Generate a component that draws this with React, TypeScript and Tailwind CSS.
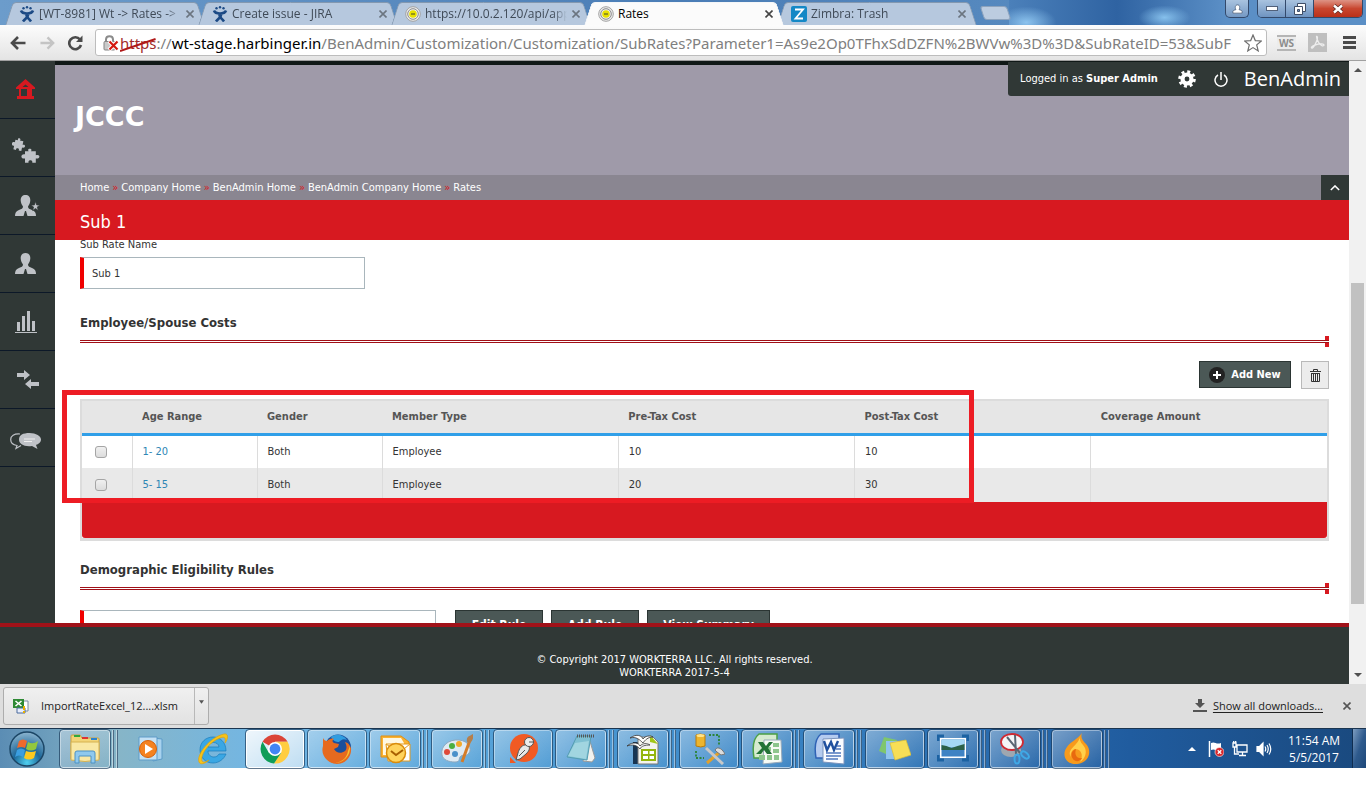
import React from 'react'

const UI = "font-['Open_Sans','Noto_Sans',sans-serif]"
const APP = "font-['DejaVu_Sans_Condensed','DejaVu_Sans',sans-serif]"

type Svg = { children: React.ReactNode; size?: number; className?: string }

function Icon({ children, size = 32, className = '' }: Svg) {
    return (
        <svg viewBox="0 0 32 32" width={size} height={size} className={`shrink-0 ${className}`} aria-hidden="true">
            {children}
        </svg>
    )
}

/* ---------- browser ---------- */

const JiraIcon = () => (
    <svg viewBox="0 0 16 16" width="16" height="16" className="shrink-0" fill="none" stroke="#1c4a85" strokeWidth="2.6">
        <path d="M2 4.500c1.500 4 10.500 4 12 0M7.500 8c-1 3 2 4 4.500 7.500M9 8c1 3-2.500 4-5 7.500" />
        <circle cx="4.500" cy="2.200" r="1.200" fill="#1c4a85" stroke="none" />
        <circle cx="8" cy="1.200" r="1.200" fill="#1c4a85" stroke="none" />
        <circle cx="11.500" cy="2.200" r="1.200" fill="#1c4a85" stroke="none" />
    </svg>
)

const TargetIcon = () => (
    <svg viewBox="0 0 16 16" width="16" height="16" className="shrink-0" fill="none">
        <circle cx="8" cy="8" r="7.300" stroke="#a2a2a2" fill="#eee" />
        <circle cx="8" cy="8" r="5.300" stroke="#8a8a8a" />
        <circle cx="8" cy="8" r="3.800" fill="#e8e000" />
        <path d="M6 8h4" stroke="#7a7a20" strokeWidth="1.500" />
    </svg>
)

const ZimbraIcon = () => (
    <svg viewBox="0 0 16 16" width="16" height="16" className="shrink-0">
        <rect width="16" height="16" rx="2" fill="#1488c6" />
        <path d="M4 3.500h8L4.500 12.500H12" fill="none" stroke="#fff" strokeWidth="1.800" />
    </svg>
)

const CloseX = ({ color = '#6b7580' }: { color?: string }) => (
    <svg viewBox="0 0 8 8" width="8" height="8" stroke={color} strokeWidth="1.600">
        <path d="M.5.5l7 7M7.500.5l-7 7" />
    </svg>
)

const tabs = [
    { title: '[WT-8981] Wt -> Rates ->', icon: <JiraIcon />, active: false },
    { title: 'Create issue - JIRA', icon: <JiraIcon />, active: false },
    { title: 'https://10.0.2.120/api/app', icon: <TargetIcon />, active: false },
    { title: 'Rates', icon: <TargetIcon />, active: true },
    { title: 'Zimbra: Trash', icon: <ZimbraIcon />, active: false },
]

function TabStrip() {
    return (
        <div className="flex h-[25px] items-end bg-linear-to-r from-[#6c9ccb] via-[#4a7db6] to-[#6396c8] pl-[5px]">
            {tabs.map((t, i) => (
                <div key={i} className={`relative -mr-[7px] h-[23px] w-[200px] ${t.active ? 'z-10' : ''}`}>
                    <span
                        className={`absolute inset-y-0 left-1 w-1/2 -skew-x-[18deg] rounded-tl border-t border-l ${
                            t.active ? 'border-[#f4f6f8] bg-[#fbfbfb]' : 'border-[#8398b0] bg-[#b6c8de]'
                        }`}
                    />
                    <span
                        className={`absolute inset-y-0 right-1 w-1/2 skew-x-[18deg] rounded-tr border-t border-r ${
                            t.active ? 'border-[#f4f6f8] bg-[#fbfbfb]' : 'border-[#8398b0] bg-[#b6c8de]'
                        }`}
                    />
                    <div className="relative flex h-full items-center pr-2 pl-3.5">
                        {t.icon}
                        <span
                            className={`ml-1 w-[142px] overflow-hidden text-[12px] whitespace-nowrap ${
                                t.active ? 'text-black' : 'mask-r-from-90% text-[#3f4a57]'
                            }`}
                        >
                            {t.title}
                        </span>
                        <button aria-label="Close tab" className="ml-[5px]">
                            <CloseX color={t.active ? '#444' : '#6b7580'} />
                        </button>
                    </div>
                </div>
            ))}
            <button
                aria-label="New tab"
                className="mb-[5px] ml-3 h-[14px] w-[27px] skew-x-[18deg] rounded-[3px] border border-[#8da3bd] bg-[#bccce0]"
            />
            <div className="flex-1 self-stretch bg-[radial-gradient(ellipse_30px_16px_at_8%_90%,#8cc3ee,transparent),radial-gradient(ellipse_26px_12px_at_72%_70%,#86c0ec,transparent),linear-gradient(90deg,#4b80ba,#2f63a2_50%,#5b8fc6)]" />
            <div className="flex gap-2 self-stretch bg-[#5b8fc6] pr-[3px]">
                <button
                    aria-label="User"
                    className="flex h-[18px] w-6 items-center justify-center rounded-b-[5px] border border-t-0 border-[#33496b] bg-linear-to-b from-[#a9c3df] to-[#7599c4]"
                >
                    <svg viewBox="0 0 12 10" width="11" height="10" fill="#fff" stroke="#4a5a75" strokeWidth=".8">
                        <path d="M1 9.500V7.500C1 6.500 3.500 6 4.300 5.700 2.500 2 4.500.5 6 .5s3.500 1.500 1.700 5.200C8.500 6 11 6.500 11 7.500v2z" />
                    </svg>
                </button>
                <div className="flex h-[18px] overflow-hidden rounded-b-[5px] border border-t-0 border-[#33496b]">
                    <button
                        aria-label="Minimize"
                        className="flex w-7 items-center justify-center border-r border-[#33496b] bg-linear-to-b from-[#a9c3df] to-[#6f94c1]"
                    >
                        <span className="h-[5px] w-3 border border-[#52617a] bg-white" />
                    </button>
                    <button
                        aria-label="Restore"
                        className="flex w-7 items-center justify-center border-r border-[#33496b] bg-linear-to-b from-[#a9c3df] to-[#6f94c1]"
                    >
                        <svg viewBox="0 0 12 12" width="12" height="12" fill="#fff" stroke="#3f4d66">
                            <path d="M3.500.5h8v8h-8z" />
                            <path d="M.5 3.500h8v8h-8z" />
                            <path d="M3.500 6.500h2v2h-2z" fill="#6f94c1" />
                        </svg>
                    </button>
                    <button
                        aria-label="Close"
                        className="flex w-12 items-center justify-center bg-linear-to-b from-[#dd9385] via-[#c8462f] to-[#bb3019]"
                    >
                        <svg viewBox="0 0 12 10" width="12" height="10">
                            <path d="M2 1.500l8 7M10 1.500l-8 7" stroke="#5c2a26" strokeWidth="4" />
                            <path d="M2 1.500l8 7M10 1.500l-8 7" stroke="#fff" strokeWidth="2.400" />
                        </svg>
                    </button>
                </div>
            </div>
        </div>
    )
}

function Toolbar() {
    return (
        <div className="flex h-9 items-center border-b border-[#a0a0a0] bg-linear-to-b from-[#fcfcfc] to-[#e4e4e4] px-2.5">
            <button aria-label="Back" className="mr-3.5">
                <svg viewBox="0 0 16 14" width="16" height="14" fill="none" stroke="#4a4a4a" strokeWidth="2.600">
                    <path d="M15.500 7H2.500M8 1L2 7l6 6" />
                </svg>
            </button>
            <button aria-label="Forward" className="mr-3">
                <svg viewBox="0 0 16 14" width="15" height="14" fill="none" stroke="#c4c4c4" strokeWidth="2.600">
                    <path d="M.5 7h13M8 1l6 6-6 6" />
                </svg>
            </button>
            <button aria-label="Reload" className="mr-3">
                <svg viewBox="0 0 16 16" width="16" height="16" fill="none" stroke="#4a4a4a" strokeWidth="2.600">
                    <path d="M13 4.500A6 6 0 1 0 14 10" />
                    <path d="M15.500.5v6.500H9z" fill="#4a4a4a" stroke="none" />
                </svg>
            </button>
            <div
                role="textbox"
                aria-label="Address"
                className="flex h-[27px] min-w-0 flex-1 items-center rounded-[3px] border border-[#bdbdbd] bg-white pr-1 pl-[7px]"
            >
                <svg viewBox="0 0 16 16" width="16" height="16" className="mr-px shrink-0">
                    <path d="M3 7V4.500C3 0 10 0 10 4.500V7" fill="none" stroke="#8b8b8b" strokeWidth="2" />
                    <rect x="1" y="6.500" width="11" height="8.500" rx="1" fill="#c9c9c9" stroke="#858585" />
                    <path d="M6 6l9 9M15 6l-9 9" stroke="#fff" strokeWidth="4" />
                    <path d="M6.500 6.500l8 8M14.500 6.500l-8 8" stroke="#d3180f" strokeWidth="2.200" />
                </svg>
                <span className="min-w-0 flex-1 overflow-hidden font-['Noto_Sans',sans-serif] text-[15px] leading-[22px] whitespace-nowrap text-[#808080]">
                    <span className="relative text-[#a12a2a]">
                        https
                        <svg viewBox="0 0 38 16" className="absolute inset-x-0 top-1 h-4 w-full" preserveAspectRatio="none">
                            <path d="M0 14L37 2" stroke="#b01818" strokeWidth="2" />
                        </svg>
                    </span>
                    ://<span className="text-black">wt-stage.harbinger.in</span>
                    /BenAdmin/Customization/Customization/SubRates?Parameter1=As9e2Op0TFhxSdDZFN%2BWVw%3D%3D&amp;SubRateID=53&amp;SubF
                </span>
                <svg viewBox="0 0 18 18" width="18" height="18" className="shrink-0" fill="#fff" stroke="#6e6e6e" strokeWidth="1.200">
                    <path d="M9 1l2.300 5.600 6 .4-4.600 3.900 1.500 6L9 13.600 3.800 16.900l1.500-6L.7 7l6-.4z" />
                </svg>
            </div>
            <button
                aria-label="WebSite tools"
                className="ml-2.5 h-4 w-[19px] border-y-2 border-[#b5b5b5] bg-[#ececec] text-center text-[10px] leading-3 font-bold text-[#8d8d8d]"
            >
                WS
            </button>
            <button aria-label="PDF" className="ml-3 flex size-[19px] items-center justify-center bg-[#bfbfbf]">
                <svg viewBox="0 0 16 16" width="15" height="15" fill="none" stroke="#eee" strokeWidth="1.400">
                    <path d="M7 1.500c2 0 .5 5-1.500 8.500S2 15 1.500 13.500s7-4.500 11-4 2.500 2.500.5 2S7 6 7 1.500z" />
                </svg>
            </button>
            <button aria-label="Menu" className="ml-4 flex w-[13px] flex-col gap-0.5">
                <span className="h-[3px] bg-[#4a4a4a]" />
                <span className="h-[3px] bg-[#4a4a4a]" />
                <span className="h-[3px] bg-[#4a4a4a]" />
            </button>
        </div>
    )
}

/* ---------- application ---------- */

const puzzle = 'M0 3h3C1 0 7 0 5 3h4v4c4-2 4 4 0 3v4H6c1-3-4-3-3 0H0v-4c-4 1-4-5 0-4z'
const person = 'M10.500 0c3 0 5 2 4.800 5.500C15.200 8 14 10 13 11.500c0 2 1.500 2.500 4 3.500 3 1 4 3 4 6h-8.500L11 16h-1l-1.500 5H0c0-3 1-5 4-6 2.500-1 4-1.500 4-3.500C7 10 5.800 8 5.700 5.500 5.500 2 7.500 0 10.500 0z'

const navItems = [
    {
        label: 'Home',
        icon: (
            <svg viewBox="0 0 19 22" width="19" height="22">
                <path
                    fillRule="evenodd"
                    d="M9.500 0L19 8.500V10h-3v7h2v3H1v-3h2v-7H0V8.500zM5 10v7h6v-7zM6.500 8h6L9.500 5.500z"
                    fill="#d71920"
                />
            </svg>
        ),
    },
    {
        label: 'Components',
        icon: (
            <svg viewBox="0 0 28 27" width="28" height="27" fill="#bfc2c7" className="mt-1">
                <path d={puzzle} transform="translate(4 1) rotate(12) scale(.9)" />
                <path d={puzzle} transform="translate(13 12) scale(1.200 1.050)" />
            </svg>
        ),
    },
    {
        label: 'Favourite employees',
        icon: (
            <svg viewBox="0 0 25 21" width="25" height="21" fill="#bfc2c7" className="ml-1">
                <path d={person} />
                <path d="M20.500 6.500l1.200 3.500H25l-2.700 2 1 3.500-2.800-2-2.900 2 1-3.500-2.700-2h3.500z" stroke="#303836" strokeWidth=".7" />
            </svg>
        ),
    },
    {
        label: 'Employees',
        icon: (
            <svg viewBox="0 0 21 21" width="21" height="21" fill="#bfc2c7">
                <path d={person} />
            </svg>
        ),
    },
    {
        label: 'Reports',
        icon: (
            <svg viewBox="0 0 22 22" width="22" height="22" fill="#bfc2c7">
                <path d="M2 11h3v9H2zM7 5h3v15H7zM12 0h3v20h-3zM17 10h3v10h-3zM0 21h22v1H0z" />
            </svg>
        ),
    },
    {
        label: 'Transfers',
        icon: (
            <svg viewBox="0 0 22 19" width="22" height="19" fill="#bfc2c7" className="ml-1">
                <path d="M0 3h7V0l6 5-6 5V7H0zM22 12h-8V9l-6 5 6 5v-3h8z" />
            </svg>
        ),
    },
    {
        label: 'Messages',
        icon: (
            <svg viewBox="0 0 31 17" width="31" height="17" className="mt-2">
                <path d="M10 1C4 .5.700 3 .700 6.500S4 12 7 12.500L6 15.500l5-3" fill="none" stroke="#bfc2c7" strokeWidth="1.200" />
                <path d="M19.500 0C26 0 31 3 31 6.500c0 3-2.500 4.500-5 5.500l1.500 4-5.500-3c-8 1-13-2-13-6.500S13 0 19.500 0z" fill="#bfc2c7" />
                <path d="M14 6h11M14 8.500h8" stroke="#eee" />
            </svg>
        ),
    },
]

const crumbs = ['Home', 'Company Home', 'BenAdmin Home', 'BenAdmin Company Home', 'Rates']

const columns = ['Age Range', 'Gender', 'Member Type', 'Pre-Tax Cost', 'Post-Tax Cost', 'Coverage Amount']

const rows = [
    { age: '1- 20', gender: 'Both', member: 'Employee', pre: '10', post: '10', coverage: '' },
    { age: '5- 15', gender: 'Both', member: 'Employee', pre: '20', post: '30', coverage: '' },
]

function SectionTitle({ children }: { children: React.ReactNode }) {
    return (
        <div>
            <h2 className="text-[13px] leading-4 font-bold text-[#333]">{children}</h2>
            <div className="mt-[5px] flex h-[11px] items-center">
                <div className="h-[3px] flex-1 border-y border-[#a01018]" />
                <div className="flex w-1 flex-col">
                    <span className="h-1 bg-[#d71920]" />
                    <span className="h-[3px] border-y border-[#a01018]" />
                    <span className="h-1 bg-[#d71920]" />
                </div>
            </div>
        </div>
    )
}

function DarkButton({ children, className = '' }: { children: React.ReactNode; className?: string }) {
    return (
        <button
            className={`flex items-center justify-center border border-[#2b3533] bg-[#4b5856] font-bold text-white ${className}`}
        >
            {children}
        </button>
    )
}

function Sidebar() {
    return (
        <nav className="w-[55px] shrink-0 bg-[#303836]">
            {navItems.map((n) => (
                <a
                    key={n.label}
                    href="#"
                    aria-label={n.label}
                    className="flex h-[58px] items-center justify-center border-b border-[#0c1828] pr-1"
                >
                    {n.icon}
                </a>
            ))}
        </nav>
    )
}

function Header() {
    return (
        <header>
            <div className="flex h-[114px] items-start justify-between border-t-4 border-[#101817] bg-[#9f9aa9] pl-5">
                <h1 className="pt-9 font-['DejaVu_Sans',sans-serif] text-[27px] leading-8 font-bold text-white">JCCC</h1>
                <div className="-mt-[3px] flex h-[34px] items-center rounded-bl-[3px] bg-[#303836] pr-2 pl-3 text-[11px] text-white">
                    <span>
                        Logged in as <b>Super Admin</b>
                    </span>
                    <button aria-label="Settings" className="ml-5">
                        <svg viewBox="0 0 20 20" width="18" height="18" fill="none" stroke="#fff">
                            <circle cx="10" cy="10" r="5" strokeWidth="4.600" />
                            <circle cx="10" cy="10" r="8.300" strokeWidth="3" strokeDasharray="3.300 3.220" />
                        </svg>
                    </button>
                    <button aria-label="Log out" className="ml-[18px]">
                        <svg viewBox="0 0 14 16" width="14" height="16" fill="none" stroke="#fff" strokeWidth="1.500">
                            <path d="M4 4a6 6 0 1 0 6 0M7 1v8" />
                        </svg>
                    </button>
                    <span className="ml-4 font-['Open_Sans',sans-serif] text-[20px] font-medium">BenAdmin</span>
                </div>
            </div>
            <div className="flex h-[25px] items-center justify-between bg-[#8a8691] pl-[25px]">
                <div className="flex gap-[3px] pt-0.5 text-[11px] text-white">
                    {crumbs.map((c, i) => (
                        <React.Fragment key={c}>
                            {i > 0 && <span className="text-[#d71920]">»</span>}
                            <a href="#">{c}</a>
                        </React.Fragment>
                    ))}
                </div>
                <button aria-label="Collapse" className="flex h-full w-7 items-center justify-center bg-[#303836]">
                    <svg viewBox="0 0 12 7" width="10" height="6" fill="none" stroke="#fff" strokeWidth="1.800">
                        <path d="M1 6l5-5 5 5" />
                    </svg>
                </button>
            </div>
            <div className="flex h-10 items-center bg-[#d71920] pt-0.5 pl-[25px] text-[18px] text-white">Sub 1</div>
        </header>
    )
}

function RatesTable() {
    return (
        <div className="relative mt-2.5">
            <div className="border-2 border-b-3 border-[#dcdcdc]">
                <table className="w-full table-fixed text-left text-[11px] text-[#333]">
                    <colgroup>
                        <col className="w-[50px]" />
                        <col className="w-[125px]" />
                        <col className="w-[125px]" />
                        <col />
                        <col />
                        <col />
                        <col />
                    </colgroup>
                    <thead>
                        <tr className="h-[33px] border-b-3 border-[#309fe8] bg-[#e6e6e6] text-[#555]">
                            <th aria-label="Select" />
                            {columns.map((c) => (
                                <th key={c} className="pl-2.5 font-bold">
                                    {c}
                                </th>
                            ))}
                        </tr>
                    </thead>
                    <tbody>
                        {rows.map((r) => (
                            <tr key={r.age} className="h-[34px] even:bg-[#e9e9e9]">
                                <td className="pl-[13px]">
                                    <input
                                        type="checkbox"
                                        aria-label={r.age}
                                        className="block size-3 appearance-none rounded-[3px] border border-[#a5a5a5] bg-linear-to-b from-[#f0f0f0] to-[#dcdcdc]"
                                    />
                                </td>
                                <td className="border-l border-[#dcdcdc] pl-2.5">
                                    <a href="#" className="text-[#2e86b5]">
                                        {r.age}
                                    </a>
                                </td>
                                <td className="border-l border-[#dcdcdc] pl-2.5">{r.gender}</td>
                                <td className="border-l border-[#dcdcdc] pl-2.5">{r.member}</td>
                                <td className="border-l border-[#dcdcdc] pl-2.5">{r.pre}</td>
                                <td className="border-l border-[#dcdcdc] pl-2.5">{r.post}</td>
                                <td className="border-l border-[#dcdcdc] pl-2.5">{r.coverage}</td>
                            </tr>
                        ))}
                    </tbody>
                </table>
                <div className="h-9 rounded-b-[3px] bg-[#d71920]" />
            </div>
            {/* highlight over the columns in question */}
            <div className="absolute -top-[9px] -left-[18px] h-[113px] w-[912px] border-5 border-[#ed1c24]" />
        </div>
    )
}

function Content() {
    return (
        <main className="min-h-0 flex-1 overflow-hidden bg-white pr-5 pl-[25px]">
            <label htmlFor="subRateName" className="block text-[11px] leading-[9px] text-[#333]">
                Sub Rate Name
            </label>
            <input
                id="subRateName"
                defaultValue="Sub 1"
                className="mt-2 block h-8 w-[285px] border border-l-4 border-[#a9b6bc] border-l-[#f00000] px-2 text-[11px] text-[#333]"
            />
            <div className="mt-[26px]">
                <SectionTitle>Employee/Spouse Costs</SectionTitle>
            </div>
            <div className="mt-3.5 flex justify-end gap-2.5">
                <DarkButton className="h-[27px] w-[92px] gap-1.5 pt-px text-[11px]">
                    <svg viewBox="0 0 16 16" width="16" height="16">
                        <circle cx="8" cy="8" r="8" fill="#222" />
                        <path d="M8 4v8M4 8h8" stroke="#fff" strokeWidth="2" />
                    </svg>
                    Add New
                </DarkButton>
                <button aria-label="Delete" className="flex h-7 w-7 items-center justify-center border border-[#b9b9b9] bg-[#ececec]">
                    <svg viewBox="0 0 11 13" width="11" height="13" fill="none" stroke="#333">
                        <path d="M0 2.500h11M3.500 2.500v-2h4v2M1.500 4v8.500h8V4M3.500 5v7M5.500 5v7M7.500 5v7M1 4.500h9" />
                    </svg>
                </button>
            </div>
            <RatesTable />
            <div className="mt-[21px]">
                <SectionTitle>Demographic Eligibility Rules</SectionTitle>
            </div>
            <div className="mt-4 flex gap-2">
                <select
                    aria-label="Eligibility rule"
                    className="mr-[11px] h-8 w-[356px] appearance-none border border-l-4 border-[#a9b6bc] border-l-[#f00000] px-2 pt-1 text-[11px] text-[#333]"
                >
                    <option>Employee Rule</option>
                </select>
                <DarkButton className="h-[29px] w-[88px] text-[12px]">Edit Rule</DarkButton>
                <DarkButton className="h-[29px] w-[88px] text-[12px]">Add Rule</DarkButton>
                <DarkButton className="h-[29px] w-[123px] text-[12px]">View Summary</DarkButton>
            </div>
        </main>
    )
}

function Scrollbar() {
    return (
        <div className="flex w-[17px] shrink-0 flex-col items-center justify-between bg-[#f1f1f1] py-[7px]">
            <svg viewBox="0 0 8 4" width="8" height="4" fill="#505050">
                <path d="M4 0l4 4H0z" />
            </svg>
            <div className="mt-[141px] h-[321px] w-[13px] bg-[#c1c1c1]" />
            <svg viewBox="0 0 8 4" width="8" height="4" fill="#505050">
                <path d="M0 0h8L4 4z" />
            </svg>
        </div>
    )
}

/* ---------- desktop ---------- */

function DownloadBar() {
    return (
        <div className="flex h-11 items-center justify-between bg-[#dedede] pr-[15px] pl-[3px]">
            <div className="flex h-[38px] items-center rounded-[3px] border border-[#adadad] bg-linear-to-b from-[#f0f0f0] to-[#e2e2e2]">
                <button className="flex h-full w-[190px] items-center gap-3 pl-[9px] text-[11px] text-[#222]">
                    <svg viewBox="0 0 16 16" width="16" height="16">
                        <path d="M5 3h10v10H5z" fill="#fff" stroke="#7a8ca0" />
                        <path d="M0 1h11v9H0z" fill="#2f8a35" />
                        <path d="M2.500 3l6 5M8.500 3l-6 5" stroke="#fff" strokeWidth="1.600" />
                        <path d="M4 10h8v5H4z" fill="#e8eefc" stroke="#4a6a9c" />
                        <path d="M11 8v4M11 13v2" stroke="#e8b000" strokeWidth="2" />
                    </svg>
                    ImportRateExcel_12....xlsm
                </button>
                <button aria-label="Download options" className="h-full w-3.5 border-l border-[#b8b8b8] pb-2 pl-1">
                    <svg viewBox="0 0 6 4" width="5" height="4" fill="#555">
                        <path d="M0 0h6L3 4z" />
                    </svg>
                </button>
            </div>
            <div className="flex items-center text-[11px]">
                <svg viewBox="0 0 14 14" width="14" height="14" fill="#555" className="mr-1.5">
                    <path d="M5 0h4v4h3L7 9 2 4h3zM0 11h14v2H0z" />
                </svg>
                <a href="#" className="text-[#222] underline underline-offset-2">
                    Show all downloads...
                </a>
                <button aria-label="Close downloads" className="ml-5">
                    <CloseX color="#555" />
                </button>
            </div>
        </div>
    )
}

type TaskItem = { label: string; kind: 'single' | 'stack' | 'none' | 'lit'; icon: React.ReactNode }

const taskItems: TaskItem[] = [
    {
        label: 'Explorer',
        kind: 'stack',
        icon: (
            <>
                <path d="M2 3q0-1 1-1h8l2 3h16q1 0 1 1v20H2z" fill="#f2d477" stroke="#c9a040" />
                <path d="M5 2h6v2H5z" fill="#32a83c" />
                <path d="M13 4h6v2h-6z" fill="#d33" />
                <path d="M22 5h6v2h-6z" fill="#2b82d0" />
                <path d="M2 9h28v18q-14 3-28 0z" fill="#f9e8a4" stroke="#d6b250" />
                <path d="M6 30V20q0-2 2-2h16q2 0 2 2v10h-4v-7H10v7z" fill="#8fc9ee" stroke="#4d92c4" />
            </>
        ),
    },
    {
        label: 'Media Player',
        kind: 'none',
        icon: (
            <>
                <path d="M18 5l9 1v20l-9 2z" fill="#a8d2ee" stroke="#5d9cc8" />
                <path d="M4 4h18v23H4z" fill="#c4e1f5" stroke="#5f9bc8" />
                <circle cx="13" cy="16" r="8.500" fill="#f58220" stroke="#d4600a" />
                <path d="M10 11l8 5-8 5z" fill="#fff" />
            </>
        ),
    },
    {
        label: 'Internet Explorer',
        kind: 'none',
        icon: (
            <>
                <path
                    d="M29 21C27 26 22 30 16 30 8 30 3 24 3 17 3 9 9 4 16 4s13 5 13 14H11c0 4 3 6 6 6 2 0 4-1 5-3zM11 14h11c0-3-3-4.500-5.500-4.500S11.500 11 11 14z"
                    fill="#3aa7e4"
                    stroke="#1b7cba"
                    strokeWidth=".7"
                />
                <path d="M2 29C-1 22 13 4 27 1c6-1 3 7 1 9C29 5 28 3 23 5 12 9 3 22 5 28c1 2 4 1 7-1-4 4-9 5-10 2z" fill="#f7c21a" stroke="#dfa000" strokeWidth=".6" />
            </>
        ),
    },
    {
        label: 'Chrome',
        kind: 'lit',
        icon: (
            <>
                <path d="M16 16L3.500 8.800A14.500 14.500 0 0 1 28.600 8.800H16z" fill="#db4437" />
                <path d="M16 8.800h12.600A14.500 14.500 0 0 1 15 30.500L22 19z" fill="#ffcd40" />
                <path d="M16 16l6 4-7 10.500A14.500 14.500 0 0 1 3.500 8.800L10 20z" fill="#0f9d58" />
                <circle cx="16" cy="16" r="7" fill="#fff" />
                <circle cx="16" cy="16" r="5.400" fill="#4285f4" />
            </>
        ),
    },
    {
        label: 'Firefox',
        kind: 'single',
        icon: (
            <>
                <circle cx="17" cy="14.500" r="13" fill="#1c4f9c" />
                <path d="M10 4c5-4 13-2 16 3-4-2-6 0-8 2-3 0-6-1-8-5z" fill="#2f9de0" />
                <path d="M2 5c1 2 2 3 4 3 2-2 5-3 7-2-2 1-2 3 0 4l5 1-1 3-4 2c2 4 7 5 11 2 2-2 2-5 0-9 4 1 5 4 6 6 1 9-6 16-14 16S-1 23 2 13z" fill="#e66a1f" />
                <path d="M29 13c1 10-7 17-15 17 8-1 12-6 13-12z" fill="#f9c22e" />
            </>
        ),
    },
    {
        label: 'Outlook',
        kind: 'stack',
        icon: (
            <>
                <path d="M2 3h20l8 6v15H2z" fill="#f9b233" stroke="#df8e10" />
                <path d="M4 5h18l3 5v12H4z" fill="#fff8e2" />
                <path d="M7 11h24v17H9z" fill="#fff" stroke="#e39a1c" />
                <path d="M7 11l13 9 11-9" fill="none" stroke="#e39a1c" />
                <circle cx="17" cy="20" r="9.500" fill="#ffd35c" stroke="#d98c0b" strokeWidth="1.500" />
                <path d="M12 18l5 4 7-5" fill="none" stroke="#a85f00" strokeWidth="2" />
            </>
        ),
    },
    {
        label: 'Paint',
        kind: 'stack',
        icon: (
            <>
                <path d="M1 22C-1 13 8 6 18 7s13 9 10 13-5 1-8 3 0 6-6 6S2 27 1 22z" fill="#dfeaf3" stroke="#8fa9bf" />
                <circle cx="6" cy="19" r="3" fill="#e04a3a" />
                <circle cx="11" cy="13" r="3" fill="#4cae3f" />
                <circle cx="18" cy="11" r="3" fill="#f3a92b" />
                <circle cx="14" cy="21" r="3" fill="#4a90ca" />
                <path d="M29 7L21 29" stroke="#d57c28" strokeWidth="3" />
                <path d="M26 9C25 3 29 3 32 1c1 5-1 7-3 9z" fill="#b57f4c" />
            </>
        ),
    },
    {
        label: 'Postman',
        kind: 'single',
        icon: (
            <>
                <circle cx="17" cy="15" r="14" fill="#f15a24" />
                <path d="M3 24v6h6z" fill="#f15a24" />
                <path d="M20 12c-5-1-8 4-9 8l-2 7 4-1 6-5c3-3 4-5 3-8z" fill="#e8e8e8" stroke="#555" />
                <circle cx="22" cy="9" r="4.500" fill="#ececec" stroke="#555" />
                <path d="M22 9h4.500M12 23l6-6" stroke="#555" />
            </>
        ),
    },
    {
        label: 'Notepad',
        kind: 'stack',
        icon: (
            <>
                <path d="M24 5l6 20-3 4-9-1z" fill="#f2f2ee" stroke="#999" />
                <path d="M12 3h14l-4 24L2 24z" fill="#7fc0d2" stroke="#549db1" />
                <path d="M10 10l14-2-3 18L3 23z" fill="#b8e3ea" opacity=".6" />
                <path d="M12 3h17" stroke="#555" strokeWidth="3" strokeDasharray="1 1" />
            </>
        ),
    },
    {
        label: 'OpenOffice',
        kind: 'stack',
        icon: (
            <>
                <path d="M6 9h6v22H6z" fill="#183552" />
                <path d="M11 4h15l5 5v22H11z" fill="#f4f4ee" stroke="#777" />
                <path d="M23 2l8 9-8-2z" fill="#a2c617" />
                <path d="M3 5c7-5 12-2 13 1 2-3 7-4 10-2-5 0-8 3-10 6C13 7 9 3 3 5zM0 13c6-5 12-3 13 0 3-3 7-3 10-1-5 0-9 1-10 4-3-4-8-5-13-3z" fill="#fff" stroke="#333" strokeWidth=".8" />
                <path d="M14 16h15v12H14z" fill="#94b50d" />
                <path d="M16 18h5v3h-5zM22.500 18H27v3h-4.500zM16 23h5v3h-5zM22.500 23H27v3h-4.500z" fill="#fff" />
            </>
        ),
    },
    {
        label: 'Developer',
        kind: 'single',
        icon: (
            <>
                <path d="M3 2q4-2 9 0v11q-4 2-9 0z" fill="#edb52e" stroke="#b87b0a" />
                <ellipse cx="7.500" cy="2.500" rx="4" ry="1.500" fill="#ffe38a" />
                <path d="M16 2h10v10M3 18v7h8" fill="none" stroke="#2c8438" strokeWidth="1.800" strokeDasharray="2 1.500" />
                <path d="M14 30l14-12" stroke="#e3a12b" strokeWidth="3" />
                <path d="M13 15l17 16" stroke="#c8c8c8" strokeWidth="3" />
                <path d="M22 17c3-5 8 0 10 4l-4 1-4-3z" fill="#dcdcdc" stroke="#777" />
            </>
        ),
    },
    {
        label: 'Excel',
        kind: 'stack',
        icon: (
            <>
                <path d="M8 1h18v24H3q-3-18 5-24z" fill="#d6ebcf" stroke="#4ba045" strokeWidth="1.500" />
                <path d="M13 7h17l1 22-19 2z" fill="#f7fbf5" stroke="#9ab" />
                <path d="M15 14h5v4h-5zM22 10h6v4h-6zM22 16h6v4h-6zM8 22h6v5H8zM16 22h5v5h-5zM23 22h5v5h-5z" fill="#8dc68d" />
                <path d="M7 9h5l3 4 3-4h4l-5 6 4 6h-5l-3-4-3 4H5l6-6z" fill="#237336" />
            </>
        ),
    },
    {
        label: 'Word',
        kind: 'stack',
        icon: (
            <>
                <path d="M8 1h18v24H3q-3-18 5-24z" fill="#b5cbef" stroke="#2f62b5" strokeWidth="1.500" />
                <path d="M10 6l21-1v26l-21-2z" fill="#fbfcff" stroke="#7c94bd" />
                <path d="M11 8l3 9 4-8 3 8 4-9" fill="none" stroke="#20509f" strokeWidth="2.400" />
                <path d="M13 20h15M13 23h15M13 26h12M24 13h4M23 16h5" stroke="#5077bd" strokeWidth="1.500" />
            </>
        ),
    },
    {
        label: 'Sticky Notes',
        kind: 'single',
        icon: (
            <>
                <path d="M5 4l13 3-4 17-14-6z" fill="#7fc66d" />
                <path d="M7 8h13v18H7z" fill="#8fc3ee" />
                <path d="M11 10l16-3 5 15-16 5z" fill="#f7de56" stroke="#dbbd32" strokeWidth=".7" />
            </>
        ),
    },
    {
        label: 'Picture Viewer',
        kind: 'stack',
        icon: (
            <>
                <path d="M1 8V3h6M25 3h6v5M1 22v5h6M25 27h6v-5" fill="none" stroke="#1c62a2" strokeWidth="3" />
                <path d="M3 5h26v20H3z" fill="#fff" />
                <path d="M4.500 6.500h23v17h-23z" fill="#3f83c4" />
                <path d="M4.500 6.500h23v8h-23z" fill="#a5d8f5" />
                <path d="M4.500 12l5 1 5 2 6-2 7-2v6h-23z" fill="#2c6148" />
            </>
        ),
    },
    {
        label: 'Snipping Tool',
        kind: 'stack',
        icon: (
            <>
                <ellipse cx="12" cy="17" rx="10" ry="7" fill="#9fa7b0" />
                <ellipse cx="13" cy="9" rx="11" ry="8" fill="#f4f5f7" stroke="#d02a32" strokeWidth="1.800" />
                <path d="M8 4l13 16M16 2l1 19" stroke="#596673" strokeWidth="2" />
                <ellipse cx="18" cy="26" rx="2.500" ry="4.500" fill="none" stroke="#3fa8e6" strokeWidth="2" />
                <ellipse cx="26" cy="22" rx="2.500" ry="4.500" fill="none" stroke="#3fa8e6" strokeWidth="2" transform="rotate(-50 26 22)" />
            </>
        ),
    },
    {
        label: 'Burner',
        kind: 'stack',
        icon: (
            <>
                <path d="M21 0c-2 5 1 8 4 11 6 6 4 19-9 20C5 32 0 22 6 14 9 9 17 6 21 0z" fill="#f79a1c" />
                <path d="M19 4c-1 5 3 7 5 11 2 5 0 11-5 14 4-7 1-13-5-13-3 1-5 4-4 8-5-8 7-11 9-20z" fill="#ffd04a" />
                <path d="M15 16c-4 1-6 6-3 10 2 3 7 3 9-1-5 1-8-3-6-9z" fill="#e8690f" />
            </>
        ),
    },
]

const paneStyle: Record<TaskItem['kind'], string> = {
    single: 'w-full rounded-[3px] border border-[#ffffff80] bg-linear-to-br from-[#ffffff60] to-[#ffffff08] outline-1 outline-[#1c3b5cb0]',
    stack: 'w-[50px] rounded-[3px] border border-[#ffffff80] bg-linear-to-br from-[#ffffff60] to-[#ffffff08] outline-1 outline-[#1c3b5cb0]',
    lit: 'w-full rounded-[3px] border border-white bg-linear-to-br from-[#ffffffe0] to-[#ffffff90] outline-1 outline-[#1c3b5cb0]',
    none: 'w-full',
}

function Taskbar() {
    return (
        <div className="flex h-10 items-center border-t border-[#1b3550] bg-[#1a4a80]">
            <div className="flex h-full flex-1 items-center bg-[linear-gradient(90deg,#5b8db4_0,#86b5c8_120px,#72b6e4_260px,#58a5da_450px,#3f8ccb_700px,#2b70b3_950px,#205c9f_1130px,#1a4a80)]">
                <button aria-label="Start" className="mr-1.5 ml-[9px] w-[45px]">
                    <svg viewBox="0 0 36 36" width="36" height="36">
                        <defs>
                            <radialGradient id="orb" cx=".5" cy=".9" r=".9">
                                <stop offset="0" stopColor="#4fd0f0" />
                                <stop offset=".45" stopColor="#1c6799" />
                                <stop offset="1" stopColor="#8db5cf" />
                            </radialGradient>
                        </defs>
                        <circle cx="18" cy="18" r="17" fill="url(#orb)" stroke="#1b4666" strokeWidth="1.500" />
                        <path d="M10 10q4-3 8 0l-2 7q-4-2-8 0z" fill="#ee6a2c" />
                        <path d="M19 11q5 3 10-1l-2 8q-5 3-10 0z" fill="#93c83e" />
                        <path d="M8 19q4-3 8 0l-2 7q-4-3-8 0z" fill="#3b9ee0" />
                        <path d="M17 20q5 2 10 0l-2 7q-5 3-10 0z" fill="#fbc91f" />
                    </svg>
                </button>
                <div className="flex h-full items-center gap-1">
                    {taskItems.map((t) => (
                        <div key={t.label} className="flex h-[38px] w-[58px] gap-0.5">
                            <button aria-label={t.label} className={`flex h-full items-center justify-center ${paneStyle[t.kind]}`}>
                                <Icon>{t.icon}</Icon>
                            </button>
                            {t.kind === 'stack' && (
                                <>
                                    <span className="h-full w-0.5 border-r border-[#1c3b5cb0] bg-[#ffffff70]" />
                                    <span className="h-full w-0.5 border-r border-[#1c3b5cb0] bg-[#ffffff70]" />
                                </>
                            )}
                        </div>
                    ))}
                </div>
                <div className="ml-auto flex items-center text-white">
                    <button aria-label="Show hidden icons">
                        <svg viewBox="0 0 8 4" width="8" height="4" fill="#fff">
                            <path d="M4 0l4 4H0z" />
                        </svg>
                    </button>
                    <svg viewBox="0 0 16 16" width="16" height="16" className="ml-3">
                        <path d="M1.500 0v16" stroke="#fff" strokeWidth="1.500" />
                        <path d="M3 2c4-2 5 2 10 0v7c-5 2-6-2-10 0z" fill="#fff" />
                        <circle cx="11.500" cy="11" r="4.500" fill="#d9262a" stroke="#fff" strokeWidth=".6" />
                        <path d="M9.700 9.200l3.600 3.600M13.300 9.200l-3.600 3.600" stroke="#fff" strokeWidth="1.300" />
                    </svg>
                    <svg viewBox="0 0 16 16" width="16" height="16" className="ml-2" fill="none" stroke="#fff" strokeWidth="1.300">
                        <path d="M5 4h10v7H5zM10.500 11v3M7 14.500h7M1 2h3v4H1zM1.700 0v2M3.700 0v2M2.500 6v7H7" />
                    </svg>
                    <svg viewBox="0 0 16 16" width="16" height="16" className="ml-2" fill="none" stroke="#fff" strokeWidth="1.200">
                        <path d="M1 5.500h2.500L7 2v12l-3.500-3.500H1z" fill="#fff" />
                        <path d="M9 5.500q1.500 2.500 0 5M11 4q2.500 4 0 8M13 2.500q3.500 5.500 0 11" />
                    </svg>
                    <div className="mr-3 ml-4 w-[52px] text-center text-[12px] leading-[17px] whitespace-nowrap">
                        11:54 AM
                        <br />
                        5/5/2017
                    </div>
                </div>
            </div>
            <button
                aria-label="Show desktop"
                className="h-full w-3.5 border-l border-[#0f2d50] bg-linear-to-br from-[#7d9dc0] via-[#2e5a8d] to-[#1d4879]"
            />
        </div>
    )
}

export default function App() {
    return (
        <div className={`flex h-screen flex-col bg-white pb-11 ${UI}`}>
            <TabStrip />
            <Toolbar />
            <div className={`flex min-h-0 flex-1 ${APP}`}>
                <div className="flex min-w-0 flex-1 flex-col">
                    <div className="flex min-h-0 flex-1">
                        <Sidebar />
                        <div className="flex min-w-0 flex-1 flex-col">
                            <Header />
                            <Content />
                        </div>
                    </div>
                    <footer className="h-[61px] border-t-4 border-[#a01219] bg-[#303836] pt-[26px] text-center text-[11px] leading-[13px] text-white">
                        © Copyright 2017 WORKTERRA LLC. All rights reserved.
                        <br />
                        WORKTERRA 2017-5-4
                    </footer>
                </div>
                <Scrollbar />
            </div>
            <DownloadBar />
            <Taskbar />
        </div>
    )
}
